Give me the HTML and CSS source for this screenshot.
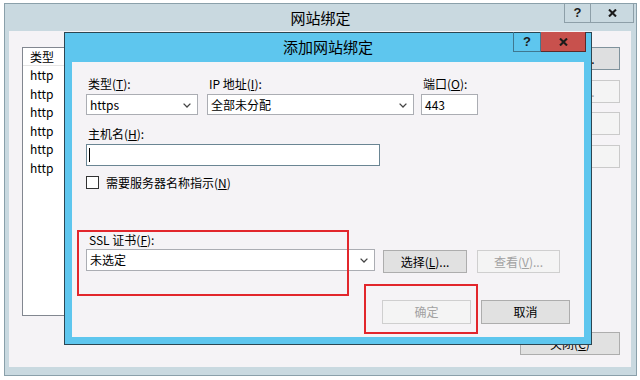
FILE: index.html
```html
<!DOCTYPE html>
<html lang="zh-CN">
<head>
<meta charset="utf-8">
<title>网站绑定</title>
<link rel="stylesheet" href="styles.css">
</head>
<body>
<div class="win outer">
  <div class="titlebar">
    <span class="title">网站绑定</span>
    <div class="caps outer-caps">
      <div class="cap help">?</div>
      <div class="cap close"><svg width="9" height="8" viewBox="0 0 9 8"><path d="M1 0.5 L8 7.5 M8 0.5 L1 7.5" stroke="#1b1b1b" stroke-width="2.1" fill="none"/></svg></div>
    </div>
  </div>
  <div class="client oc">
    <div class="list">
      <div class="lh">类型</div>
      <div class="li">http</div>
      <div class="li">http</div>
      <div class="li">http</div>
      <div class="li">http</div>
      <div class="li">http</div>
      <div class="li">http</div>
    </div>
    <div class="side">
      <div class="sb sb-default">添加(<u>A</u>)...</div>
      <div class="sb sb-dis">编辑(<u>E</u>)...</div>
      <div class="sb sb-dis">删除(<u>R</u>)</div>
      <div class="sb sb-dis">浏览(<u>B</u>)</div>
      <div class="sb sb-close">关闭(<u>C</u>)</div>
    </div>
  </div>
</div>

<div class="win inner">
  <div class="ititle">添加网站绑定</div>
  <div class="caps inner-caps">
    <div class="cap ihelp">?</div>
    <div class="cap iclose"><svg width="9" height="8" viewBox="0 0 9 8"><path d="M1 0.5 L8 7.5 M8 0.5 L1 7.5" stroke="#1b1b1b" stroke-width="2.1" fill="none"/></svg></div>
  </div>
  <div class="client ic">
    <div class="row1">
      <div class="field f-type">
        <span class="lbl">类型(<u>T</u>):</span>
        <div class="box select">https<svg class="chev" width="8" height="5" viewBox="0 0 8 5"><path d="M0.6 0.6 L4 4 L7.4 0.6" stroke="#444" stroke-width="1.3" fill="none"/></svg></div>
      </div>
      <div class="field f-ip">
        <span class="lbl">IP 地址(<u>I</u>):</span>
        <div class="box select">全部未分配<svg class="chev" width="8" height="5" viewBox="0 0 8 5"><path d="M0.6 0.6 L4 4 L7.4 0.6" stroke="#444" stroke-width="1.3" fill="none"/></svg></div>
      </div>
      <div class="field f-port">
        <span class="lbl">端口(<u>O</u>):</span>
        <div class="box">443</div>
      </div>
    </div>

    <div class="host">
      <span class="lbl">主机名(<u>H</u>):</span>
      <div class="box hostbox"><span class="caret"></span></div>
    </div>

    <div class="chkrow">
      <span class="chk"></span>
      <span>需要服务器名称指示(<u>N</u>)</span>
    </div>

    <div class="ssl">
      <span class="lbl ssl-lbl">SSL 证书(<u>F</u>):</span>
      <div class="sslrow">
        <div class="box select sslsel">未选定<svg class="chev" width="8" height="5" viewBox="0 0 8 5"><path d="M0.6 0.6 L4 4 L7.4 0.6" stroke="#444" stroke-width="1.3" fill="none"/></svg></div>
        <div class="btn btn-sel">选择(<u>L</u>)...</div>
        <div class="btn btn-dis btn-view">查看(<u>V</u>)...</div>
      </div>
    </div>

    <div class="okrow">
      <div class="btn btn-dis btn-ok">确定</div>
      <div class="btn btn-cancel">取消</div>
    </div>
  </div>
</div>

<div class="mark m1"></div>
<div class="mark m2"></div>
</body>
</html>
```

FILE: styles.css
```css
* { box-sizing: border-box; }
html, body { margin: 0; padding: 0; }
body {
  width: 640px;
  height: 380px;
  background: #ffffff;
  font-family: "Noto Sans CJK SC", "Microsoft YaHei", sans-serif;
  font-size: 12px;
  color: #000;
  position: relative;
  overflow: hidden;
}
u { text-decoration: underline; text-underline-offset: 1px; }

/* ---------- outer window ---------- */
.outer {
  margin: 3px 0 0 4px;
  width: 633px;
  height: 373px;
  background: #c9d9e0;
  border: 1px solid #8aa0aa;
  padding: 0 5px 8px 4px;
  display: flex;
  flex-direction: column;
}
.titlebar {
  height: 27px;
  margin: 0 -5px 0 -4px;
  position: relative;
  text-align: center;
  line-height: 27px;
  font-size: 15px;
}
.caps { position: absolute; display: flex; }
.outer-caps { top: -1px; right: 2px; }
.cap {
  height: 20px;
  display: flex;
  align-items: center;
  justify-content: center;
  font-family: "Liberation Sans", sans-serif;
  font-weight: bold;
  font-size: 13px;
  color: #1b1b1b;
}
.help { width: 27px; border: 1px solid #8d9fa8; border-top: none; }
.close { width: 43px; border: 1px solid #8d9fa8; border-top: none; border-left: none; }

.client { background: #f5f3f6; }
.oc {
  flex: 1;
  display: flex;
  gap: 15px;
  padding: 16px 11px 12px 13px;
}
.list {
  flex: 1;
  height: 269px;
  background: #fff;
  border: 1px solid #828790;
}
.lh {
  height: 18px;
  line-height: 17px;
  padding-left: 7px;
  border-bottom: 1px solid #e5e5e5;
}
.li {
  height: 18.6px;
  line-height: 18.6px;
  padding-left: 7px;
}
.side {
  width: 100px;
  display: flex;
  flex-direction: column;
  gap: 9.5px;
}
.sb {
  height: 23px;
  line-height: 21px;
  text-align: center;
  border: 1px solid #adadad;
}
.sb-default { background: #dedfe0; border-color: #7f929c; }
.sb-dis { background: #f4f4f4; border-color: #cacaca; color: #a0a0a0; }
.sb-close { margin-top: auto; background: #e1e1e1; }

/* ---------- inner dialog ---------- */
.inner {
  position: absolute;
  left: 64px;
  top: 32px;
  width: 528px;
  height: 313px;
  border: 1px solid #2c4652;
  background: #5ec6ee;
  padding: 0 7px 7px 7px;
}
.ititle {
  height: 29px;
  line-height: 28px;
  text-align: center;
  font-size: 15px;
}
.inner-caps { top: -1px; right: 5px; }
.ihelp { width: 28px; border: 1px solid #3f7890; border-top: none; }
.iclose { width: 45px; background: #c8514d; border: 1px solid #5a2a2a; border-top: none; border-left: none; }

.ic {
  height: 275px;
  padding: 14px 14px 0 14px;
}
.row1 { display: flex; }
.f-type { width: 112px; margin-right: 9px; }
.f-ip { width: 207px; margin-right: 7px; }
.f-port { width: 57px; }
.lbl {
  display: block;
  height: 16px;
  line-height: 16px;
  margin-bottom: 2px;
  padding-left: 2px;
  white-space: nowrap;
}
.box {
  height: 21px;
  border: 1px solid #abadb3;
  background: #fff;
  line-height: 19px;
  padding-left: 3px;
  position: relative;
  white-space: nowrap;
}
.chev { position: absolute; right: 6px; top: 8px; }

.host { margin-top: 11px; }
.hostbox {
  width: 294px;
  height: 22px;
  border-color: #6a8593;
}
.caret {
  position: absolute;
  left: 2px;
  top: 3px;
  width: 1px;
  height: 14px;
  background: #000;
}

.chkrow {
  margin-top: 10px;
  display: flex;
  align-items: center;
  gap: 7px;
  height: 13px;
  line-height: 13px;
}
.chk {
  width: 13px;
  height: 13px;
  border: 1px solid #333;
  background: #fff;
}

.ssl { margin-top: 43px; }
.ssl-lbl { margin-bottom: 1px; padding-left: 3px; }
.sslrow { display: flex; align-items: flex-start; }
.sslsel { width: 289px; height: 22px; line-height: 20px; }

.btn {
  height: 23px;
  line-height: 21px;
  text-align: center;
  background: #e1e1e1;
  border: 1px solid #adadad;
  white-space: nowrap;
}
.btn-dis { background: #f4f4f4; border-color: #cfcfcf; color: #a2a2a2; }
.btn-sel { width: 84px; margin-left: 8px; margin-top: 1px; }
.btn-view { width: 83px; margin-left: 10px; margin-top: 1px; }

.okrow {
  margin-top: 27px;
  display: flex;
  justify-content: flex-end;
  gap: 10px;
}
.btn-ok, .btn-cancel { width: 89px; height: 24px; line-height: 22px; }

/* ---------- red annotation marks ---------- */
.mark {
  position: absolute;
  border: 2px solid #e2262c;
}
.m1 { left: 77px; top: 230px; width: 272px; height: 66px; }
.m2 { left: 364px; top: 284px; width: 114px; height: 50px; }
```
